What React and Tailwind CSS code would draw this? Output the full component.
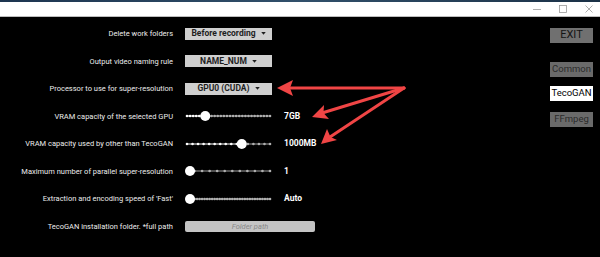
import React from 'react'

const font = { fontFamily: 'Roboto, "Liberation Sans", sans-serif' }

const Dropdown = ({ text }) => (
  <div className="flex h-[12px] w-[87px] items-center justify-center gap-[5px] bg-[#cfcfcf] text-[8.5px] font-bold text-[#1e1e1e]">
    <span>{text}</span>
    <svg width="5" height="3" viewBox="0 0 6 4"><path d="M0 0 L6 0 L3 3.5 Z" fill="#1e1e1e" /></svg>
  </div>
)

const Slider = ({ pos, ticks }) => {
  const w = 87
  const x0 = 2
  const x1 = w - 2
  const kx = x0 + (x1 - x0) * pos
  const dots = []
  for (let i = 0; i < ticks; i++) {
    const x = x0 + ((x1 - x0) * i) / (ticks - 1)
    dots.push(<circle key={i} cx={x} cy="6" r="1.3" fill={x <= kx ? '#ffffff' : '#b0b0b0'} />)
  }
  return (
    <svg width={w} height="12" viewBox={`0 0 ${w} 12`}>
      <line x1={x0} y1="6" x2={kx} y2="6" stroke="#ffffff" strokeWidth="1" />
      <line x1={kx} y1="6" x2={x1} y2="6" stroke="#a0a0a0" strokeWidth="1" />
      {dots}
      <circle cx={Math.max(kx, 5)} cy="6" r="5" fill="#ffffff" />
    </svg>
  )
}

const Row = ({ label, children, value }) => (
  <div className="grid h-[27.5px] grid-cols-[173px_87px_auto] items-center gap-x-[12px]">
    <div className="text-right text-[7.5px] text-[#ececec]">{label}</div>
    <div className="flex items-center">{children}</div>
    <div className="text-[8.5px] font-bold text-white">{value}</div>
  </div>
)

const SideButton = ({ children, active, dim, big }) => (
  <div
    className={`flex h-[15px] w-[43px] items-center justify-center ${big ? 'text-[11px]' : 'text-[9.5px]'} ${
      active ? 'bg-white text-black' : dim ? 'bg-[#6a6a6a] text-[#2a2a2a]' : 'bg-[#707070] text-[#151515]'
    }`}
  >
    {children}
  </div>
)

export default function App() {
  return (
    <div className="relative h-[257px] w-[600px] overflow-hidden bg-black" style={font}>
      <div className="h-[2px] bg-gradient-to-r from-[#1d3550] via-[#31506b] to-[#1b3147]" />
      <div className="flex h-[15px] items-center justify-end gap-[18px] border-b border-[#bdbdbd] bg-white pr-[7px] text-[#9a9a9a]">
        <svg width="8" height="8" viewBox="0 0 8 8"><line x1="0" y1="4.5" x2="8" y2="4.5" stroke="#9a9a9a" strokeWidth="0.8" /></svg>
        <svg width="8" height="8" viewBox="0 0 8 8"><rect x="0.5" y="0.5" width="7" height="7" fill="none" stroke="#9a9a9a" strokeWidth="0.8" /></svg>
        <svg width="8" height="8" viewBox="0 0 8 8"><path d="M0.5 0.5 L7.5 7.5 M7.5 0.5 L0.5 7.5" stroke="#9a9a9a" strokeWidth="0.8" /></svg>
      </div>

      <div className="flex">
        <div className="flex-1 pt-[3px]">
          <Row label="Delete work folders"><Dropdown text="Before recording" /></Row>
          <Row label="Output video naming rule"><Dropdown text="NAME_NUM" /></Row>
          <Row label="Processor to use for super-resolution"><Dropdown text="GPU0 (CUDA)" /></Row>
          <Row label="VRAM capacity of the selected GPU" value="7GB"><Slider pos={0.22} ticks={28} /></Row>
          <Row label="VRAM capacity used by other than TecoGAN" value="1000MB"><Slider pos={0.66} ticks={16} /></Row>
          <Row label="Maximum number of parallel super-resolution" value="1"><Slider pos={0} ticks={12} /></Row>
          <Row label="Extraction and encoding speed of 'Fast'" value="Auto"><Slider pos={0} ticks={34} /></Row>
          <div className="grid h-[27.5px] grid-cols-[173px_130px] items-center gap-x-[12px]">
            <div className="text-right text-[7.5px] text-[#ececec]">TecoGAN installation folder. *full path</div>
            <div className="flex h-[11px] items-center justify-center rounded-[2px] bg-[#c4c4c4] text-[7.5px] italic text-[#888888]">
              Folder path
            </div>
          </div>
        </div>

        <div className="flex w-[50px] flex-col items-start pt-[11px]">
          <SideButton big>EXIT</SideButton>
          <div className="mt-[19px]"><SideButton dim>Common</SideButton></div>
          <div className="mt-[9px]"><SideButton active>TecoGAN</SideButton></div>
          <div className="mt-[11px]"><SideButton dim>FFmpeg</SideButton></div>
        </div>
      </div>

      <svg className="pointer-events-none absolute left-0 top-0" width="600" height="257" viewBox="0 0 600 257">
        <g stroke="#f04545" strokeWidth="3" strokeLinecap="round" fill="#f04545">
          <line x1="404" y1="88" x2="288" y2="88" />
          <line x1="404" y1="88" x2="322" y2="113" />
          <line x1="404" y1="88" x2="330" y2="137" />
        </g>
        <g fill="#f04545">
          <path d="M277 88 L293 80 L290 88 L293 96 Z" />
          <path d="M312 117 L324 105 L323.5 113 L329 119 Z" />
          <path d="M321 144 L327 129 L330.5 137 L337 140 Z" />
        </g>
      </svg>
    </div>
  )
}
